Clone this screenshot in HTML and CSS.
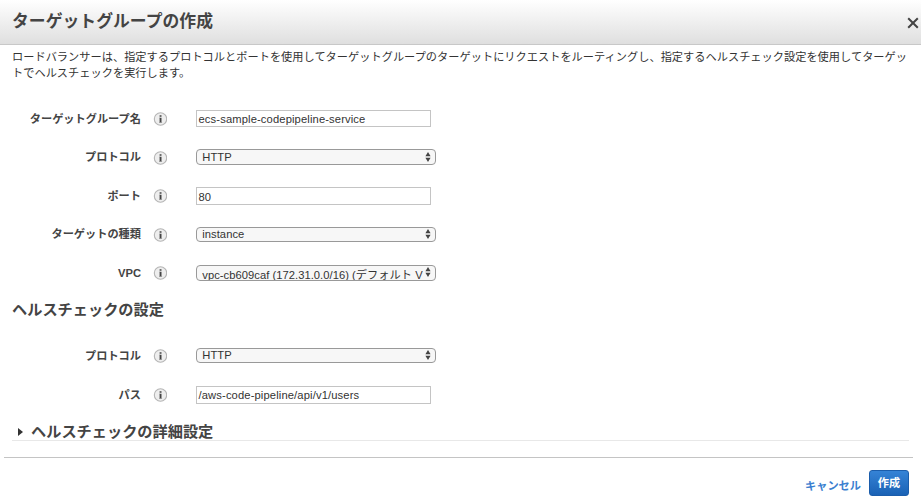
FILE: index.html
```
<!DOCTYPE html>
<html lang="ja">
<head>
<meta charset="utf-8">
<title>ターゲットグループの作成</title>
<link rel="stylesheet" href="styles.css">
</head>
<body>
<svg class="defs" width="0" height="0" aria-hidden="true">
  <symbol id="info" viewBox="0 0 14 14">
    <circle cx="7.5" cy="7" r="6.2" fill="#eee" stroke="#b5b5b5" stroke-width="1.1"/>
    <path d="M6.6 3.2h1.9v1.6H6.6zM6.6 5.7h1.9v5H6.6z" fill="#444"/>
    <path d="M6 5.7h1v.8H6zM6 10h3.1v.7H6z" fill="#999"/>
  </symbol>
  <symbol id="arrows" viewBox="0 0 6 10">
    <path d="M3 0l2.6 4.2H.4zM3 10L.4 5.8h5.2z" fill="#444"/>
  </symbol>
</svg>
<header class="header">
  <h1 class="title">ターゲットグループの作成</h1>
  <svg class="close" viewBox="0 0 12 12"><path d="M1.2 1.2l9.6 9.6M10.8 1.2l-9.6 9.6" stroke="#444" stroke-width="2"/></svg>
</header>
<main class="content">
  <p class="intro">ロードバランサーは、指定するプロトコルとポートを使用してターゲットグループのターゲットにリクエストをルーティングし、指定するヘルスチェック設定を使用してターゲッ<br>トでヘルスチェックを実行します。</p>
  <section class="fields">
    <div class="row tall"><span class="label">ターゲットグループ名</span><svg class="info"><use href="#info"/></svg><div class="input short"><span>ecs-sample-codepipeline-service</span></div></div>
    <div class="row"><span class="label">プロトコル</span><svg class="info"><use href="#info"/></svg><div class="select"><span class="value">HTTP</span><svg class="arrows"><use href="#arrows"/></svg></div></div>
    <div class="row tall"><span class="label">ポート</span><svg class="info"><use href="#info"/></svg><div class="input number"><span>80</span></div></div>
    <div class="row"><span class="label">ターゲットの種類</span><svg class="info"><use href="#info"/></svg><div class="select slim"><span class="value">instance</span><svg class="arrows"><use href="#arrows"/></svg></div></div>
    <div class="row tall"><span class="label">VPC</span><svg class="info"><use href="#info"/></svg><div class="select"><span class="value low">vpc-cb609caf (172.31.0.0/16) (デフォルト VPC)</span><svg class="arrows"><use href="#arrows"/></svg></div></div>
  </section>
  <h2 class="heading">ヘルスチェックの設定</h2>
  <section class="fields">
    <div class="row tall"><span class="label">プロトコル</span><svg class="info"><use href="#info"/></svg><div class="select slim raised"><span class="value">HTTP</span><svg class="arrows"><use href="#arrows"/></svg></div></div>
    <div class="row tall"><span class="label">パス</span><svg class="info"><use href="#info"/></svg><div class="input"><span>/aws-code-pipeline/api/v1/users</span></div></div>
  </section>
  <h2 class="advanced"><svg class="caret" viewBox="0 0 5 8"><path d="M0 0l5 4-5 4z" fill="#333"/></svg>ヘルスチェックの詳細設定</h2>
</main>
<footer class="footer">
  <a class="cancel">キャンセル</a>
  <button class="create">作成</button>
</footer>
</body>
</html>
```
FILE: styles.css
```
* { box-sizing: border-box; }
body {
  margin: 0;
  height: 504px;
  overflow: hidden;
  background: #fff;
  color: #444;
  font: 11.2px/16px "Liberation Sans", "Noto Sans CJK JP", sans-serif;
}
.defs { position: absolute; }
.header {
  display: flex;
  justify-content: space-between;
  align-items: center;
  height: 45px;
  padding: 0 2px 1px 12px;
  border-bottom: 1px solid #c8c8c8;
  background: linear-gradient(#fff, #dfdfdf);
}
.title {
  margin: 0;
  font-size: 16.8px;
  line-height: 24px;
  font-weight: bold;
  letter-spacing: 0.05px;
}
.close { width: 12px; height: 12px; margin-top: 2px; }
.content { padding: 0 12px; }
.intro {
  margin: 0;
  padding-top: 4px;
  height: 54px;
  white-space: nowrap;
  letter-spacing: 0.025px;
  color: #333;
}
.row {
  display: grid;
  grid-template-columns: 129px 15px 1fr;
  align-items: center;
  height: 38px;
}
.tall { height: 39px; }
.label { text-align: right; font-weight: bold; }
.info { width: 14px; height: 14px; margin: 1px 0 0 12px; }
.input, .select {
  display: flex;
  align-items: center;
  margin-left: 40px;
  color: #333;
}
.input {
  width: 235px;
  height: 18px;
  padding: 1px 0 0 1.5px;
  border: 1px solid #c4c4c4;
  letter-spacing: 0.13px;
}
.short { height: 17px; }
.number { padding-top: 3px; letter-spacing: 0; }
.select {
  width: 240px;
  height: 16px;
  padding: 0 4px 0 5.3px;
  border: 1px solid #999;
  border-radius: 4px;
  background: #f7f7f7;
  overflow: hidden;
}
.slim { height: 15px; }
.raised .value { padding-bottom: 2px; }
.value {
  flex: 1;
  min-width: 0;
  overflow: hidden;
  white-space: nowrap;
  letter-spacing: 0.04px;
}
.low { padding-top: 4px; }
.arrows { width: 6px; height: 10px; margin: 0 0 1px 2px; flex: none; }
.heading {
  margin: 0;
  height: 44px;
  padding-top: 6px;
  font-size: 15.2px;
  line-height: 24px;
}
.advanced {
  display: flex;
  align-items: center;
  margin: 0;
  height: 27px;
  padding: 10px 0 0 6px;
  border-bottom: 1px solid #e8e8e8;
  font-size: 15.2px;
  line-height: 16px;
}
.caret { width: 5px; height: 8px; margin-right: 8px; }
.footer {
  display: flex;
  justify-content: flex-end;
  align-items: flex-start;
  margin: 16px 8px 0 4px;
  padding: 12px 4px 0 0;
  border-top: 1px solid #c4c4c4;
}
.cancel { margin: 8px 8px 0 0; color: #3b7fd0; font-weight: bold; }
.create {
  width: 40px;
  height: 26px;
  padding: 0;
  border: 1px solid #1b5dab;
  border-radius: 3px;
  background: linear-gradient(#3583d6, #1a62b5);
  color: #fff;
  font: bold 11.2px/16px "Liberation Sans", "Noto Sans CJK JP", sans-serif;
}
```
